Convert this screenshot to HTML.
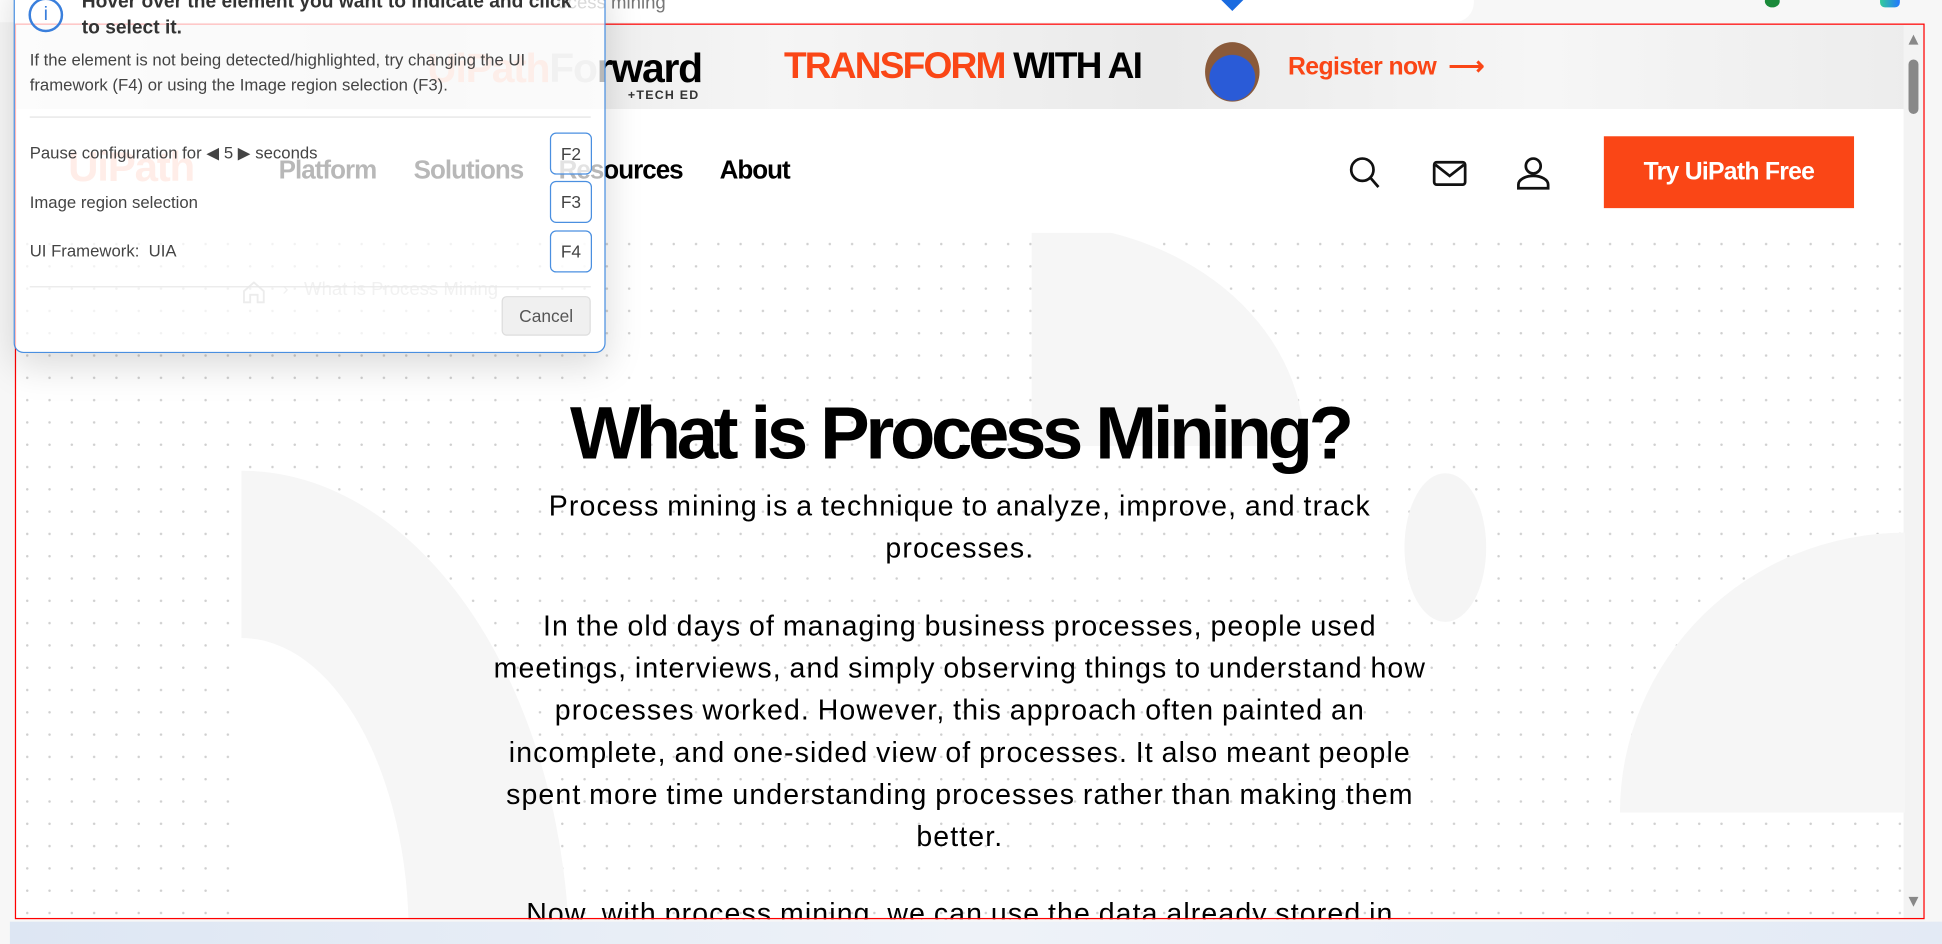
<!DOCTYPE html>
<html><head><meta charset="utf-8">
<style>
html,body{margin:0;padding:0;width:1942px;height:944px;overflow:hidden;background:#fff}
#w{position:absolute;left:0;top:0;width:1568px;height:762px;transform:scale(1.2385,1.2388);transform-origin:0 0;font-family:"Liberation Sans",sans-serif;overflow:hidden;background:#f7f7f7}
.abs{position:absolute}
#page{position:absolute;left:13px;top:20px;width:1540px;height:722px;overflow:hidden;background:#fff}
.dots{position:absolute;left:0;top:168px;width:1524px;height:560px;background-image:radial-gradient(circle,#cfcfcf 0.8px,transparent 1.2px);background-size:18px 18px}
.nav a{position:absolute;top:106px;font-size:21px;font-weight:bold;letter-spacing:-0.8px;color:#000}
.txt{position:absolute;left:0;width:1524px;text-align:center;color:#000}
.p{font-size:23px;line-height:34px;letter-spacing:0.9px;word-spacing:-1px}
.key{position:absolute;left:432px;width:32px;height:32px;border:1px solid #4a8fe0;border-radius:5px;font-size:14px;color:#444;text-align:center;line-height:32px;background:rgba(255,255,255,.6)}
.dl{position:absolute;left:12px;font-size:13.5px;color:#444}
</style></head><body><div id="w">
<div class="abs" style="left:0;top:-20px;width:1190px;height:38px;background:#fff;border-radius:0 0 16px 0"></div>
<div class="abs" style="left:450px;top:-6px;font-size:15px;color:#777">ocess mining</div>
<div class="abs" style="left:988px;top:-8px;width:14px;height:14px;background:#1a6be0;transform:rotate(45deg)"></div>
<div class="abs" style="left:1518px;top:-6px;width:16px;height:12px;background:linear-gradient(90deg,#3c9,#27f);border-radius:4px"></div>
<div class="abs" style="left:1425px;top:-4px;width:12px;height:10px;background:#1a8a3a;border-radius:50%"></div>
<div id="page">
 <div class="abs" style="left:0;top:0;width:1540px;height:68px;background:linear-gradient(90deg,#f2f2f2,#e8e8e8 20%,#f5f5f5 40%,#eaeaea 60%,#f6f6f6 80%,#ececec)"></div>
 <div class="abs" style="left:332px;top:16px;font-size:33px;font-weight:bold;color:#f8c0b0;letter-spacing:-1px">UiPath<span style="color:#ccc">Fo</span><span style="color:#000">rward</span></div>
 <div class="abs" style="left:494px;top:52px;font-size:10px;font-weight:bold;letter-spacing:1px;color:#333">+TECH ED</div>
 <div class="abs" style="left:620px;top:17px;font-size:30px;font-weight:900;letter-spacing:-1.5px;color:#fa4616">TRANSFORM <span style="color:#000">WITH AI</span></div>
 <div class="abs" style="left:960px;top:14px;width:44px;height:48px;border-radius:50%;background:radial-gradient(circle at 50% 60%,#2a5bd7 50%,#8a5a3a 52%)"></div>
 <div class="abs" style="left:1027px;top:21px;font-size:20px;font-weight:bold;color:#fa4616;letter-spacing:-0.5px">Register now &nbsp;⟶</div>
 <div class="abs" style="left:1524px;top:0;width:16px;height:722px;background:#f3f3f3"></div>
 <div class="abs" style="left:1528px;top:28px;width:8px;height:44px;background:#888;border-radius:4px"></div>
 <div class="abs" style="left:1528px;top:8px;width:0;height:0;border:4px solid transparent;border-bottom:8px solid #888;border-top:0"></div>
 <div class="abs" style="left:1528px;top:704px;width:0;height:0;border:4px solid transparent;border-top:8px solid #888;border-bottom:0"></div>
 <div class="dots"></div>
 <div class="abs" style="left:182px;top:360px;width:265px;height:400px;background:#f6f6f6;border-top-right-radius:100% 100%"></div>
 <div class="abs" style="left:182px;top:495px;width:135px;height:300px;background:#fff;border-top-right-radius:100% 80%"></div>
 <div class="abs" style="left:1121px;top:362px;width:66px;height:120px;border-radius:50%;background:#f5f5f5"></div>
 <div class="abs" style="left:1295px;top:410px;width:230px;height:226px;background:#f6f6f6;border-top-left-radius:100% 100%"></div>
 <div class="abs" style="left:820px;top:160px;width:220px;height:180px;background:#f6f6f6;border-top-right-radius:100%"></div>
 <div class="abs" style="left:0;top:68px;width:1524px;height:100px;background:#fff"></div>
 <div class="abs" style="left:42px;top:96px;font-size:34px;font-weight:bold;color:#fa4616;letter-spacing:-1px;opacity:.35">Ui<span>Path</span></div>
 <div class="nav"><a style="left:212px">Platform</a><a style="left:321px">Solutions</a><a style="left:438px">Resources</a><a style="left:568px">About</a></div>
 <svg class="abs" style="left:1076px;top:105px" width="180" height="30" viewBox="0 0 180 30" fill="none" stroke="#111" stroke-width="2.2">
  <circle cx="11" cy="12" r="9"/><line x1="17.5" y1="18.5" x2="24" y2="26"/>
  <rect x="69" y="6" width="25" height="18" rx="2"/><polyline points="70,8 81.5,17 93,8"/>
  <circle cx="149" cy="9" r="6"/><path d="M137 27 v-3 a12 7 0 0 1 24 0 v3 z"/>
 </svg>
 <div class="abs" style="left:1282px;top:90px;width:202px;height:58px;background:#fa4616;color:#fff;font-size:20px;font-weight:bold;letter-spacing:-0.6px;text-align:center;line-height:58px">Try UiPath Free</div>
 <svg class="abs" style="left:181px;top:205px" width="22" height="22" viewBox="0 0 22 22" fill="none" stroke="#bbb" stroke-width="1.5"><path d="M3 10 L11 3 L19 10 V19 H14 V13 H8 V19 H3 Z"/></svg>
 <div class="abs" style="left:215px;top:205px;font-size:15px;color:#ccc">›&nbsp;&nbsp;&nbsp;What is Process Mining</div>
 <div class="txt" style="top:295px;font-size:60px;font-weight:bold;letter-spacing:-3.5px">What is Process Mining?</div>
 <div class="txt p" style="top:371px">Process mining is a technique to analyze, improve, and track<br>processes.</div>
 <div class="txt p" style="top:468px">In the old days of managing business processes, people used<br>meetings, interviews, and simply observing things to understand how<br>processes worked. However, this approach often painted an<br>incomplete, and one-sided view of processes. It also meant people<br>spent more time understanding processes rather than making them<br>better.</div>
 <div class="txt p" style="top:700px">Now, with process mining, we can use the data already stored in</div>
</div>
<div class="abs" style="left:12px;top:19px;width:1540px;height:721px;border:1.5px solid #f00"></div>
<div class="abs" style="left:8px;top:744px;width:1560px;height:18px;background:linear-gradient(90deg,#dde6f3,#eef2f8 50%,#e3eaf5)"></div>
<div class="abs" style="left:11px;top:-20px;width:476px;height:303px;border:1.5px solid #4a8fe0;border-radius:8px;background:rgba(255,255,255,.72);box-shadow:0 10px 30px rgba(0,0,0,.15)">
 <div class="abs" style="left:11px;top:17px;width:24px;height:24px;border:2px solid #3a7fdc;border-radius:50%;color:#3a7fdc;font-size:16px;text-align:center;line-height:24px">i</div>
 <div class="abs" style="left:54px;top:10px;font-size:15.5px;font-weight:bold;color:#333;line-height:21px">Hover over the element you want to indicate and click<br>to select it.</div>
 <div class="dl" style="top:58px;line-height:20px">If the element is not being detected/highlighted, try changing the UI<br>framework (F4) or using the Image region selection (F3).</div>
 <div class="abs" style="left:12px;top:113px;width:453px;height:1px;background:#e4e4e4"></div>
 <div class="dl" style="top:135px">Pause configuration for ◀ 5 ▶ seconds</div>
 <div class="key" style="top:126px">F2</div>
 <div class="dl" style="top:175px">Image region selection</div>
 <div class="key" style="top:165px">F3</div>
 <div class="dl" style="top:214px">UI Framework: &nbsp;UIA</div>
 <div class="key" style="top:205px">F4</div>
 <div class="abs" style="left:12px;top:250px;width:453px;height:1px;background:#e8e8e8"></div>
 <div class="abs" style="left:393px;top:258px;width:70px;height:30px;border:1px solid #ddd;border-radius:4px;background:#f0f0f0;font-size:14px;color:#555;text-align:center;line-height:30px">Cancel</div>
</div>
</div></body></html>
